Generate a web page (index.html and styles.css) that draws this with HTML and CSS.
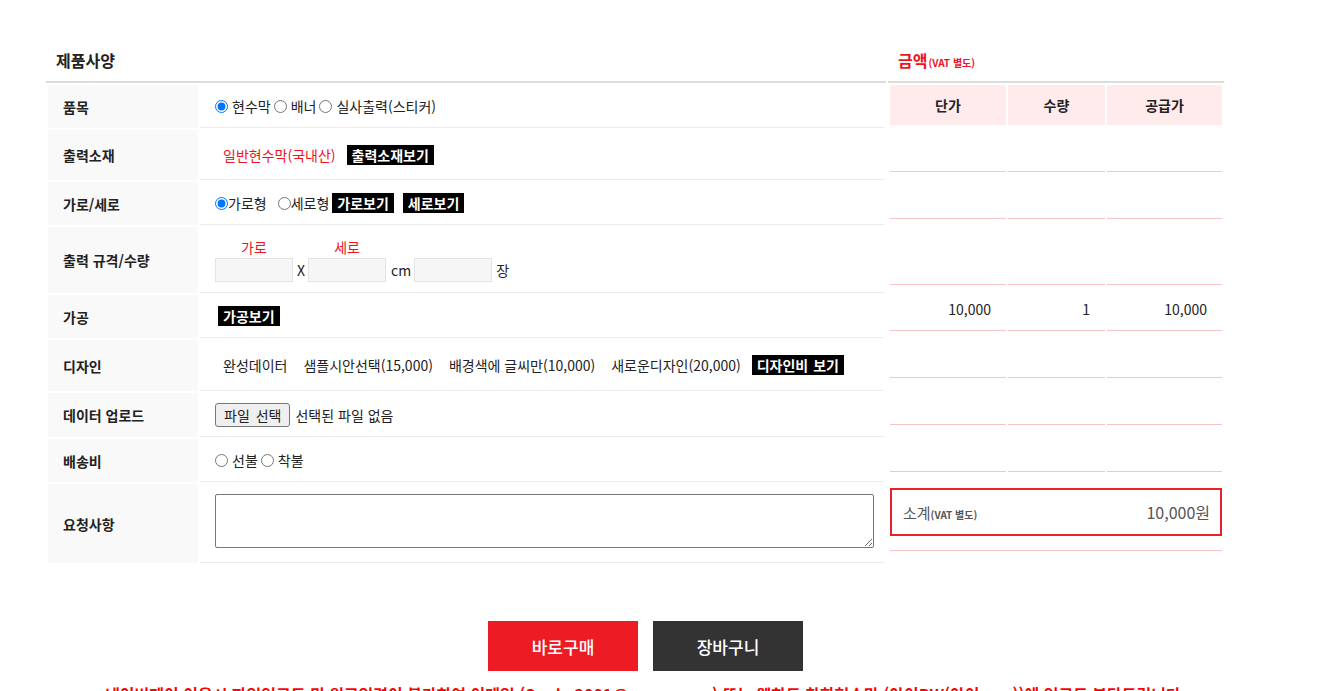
FILE: index.html
```html
<!DOCTYPE html>
<html lang="ko">
<head>
<meta charset="utf-8">
<title>제품사양</title>
<link rel="stylesheet" href="styles.css">
</head>
<body>
<div class="page">
  <div class="order">
    <section class="spec">
      <h2 class="sec-title">제품사양</h2>
      <table class="spec-table">
        <colgroup><col class="c-label"><col></colgroup>
        <tr class="h43">
          <th>품목</th>
          <td><div class="line">
            <label class="opt"><input class="radio" type="radio" name="item" checked>현수막</label>
            <label class="opt"><input class="radio" type="radio" name="item">배너</label>
            <label class="opt"><input class="radio" type="radio" name="item">실사출력(스티커)</label>
          </div></td>
        </tr>
        <tr class="h50">
          <th>출력소재</th>
          <td><div class="line">
            <span class="material">일반현수막(국내산)</span>
            <span class="tag">출력소재보기</span>
          </div></td>
        </tr>
        <tr class="h43">
          <th>가로/세로</th>
          <td><div class="line">
            <label class="opt tight"><input class="radio" type="radio" name="dir" checked>가로형</label>
            <label class="opt tight"><input class="radio" type="radio" name="dir">세로형</label>
            <span class="tag t-garo">가로보기</span>
            <span class="tag t-sero">세로보기</span>
          </div></td>
        </tr>
        <tr class="h66">
          <th>출력 규격/수량</th>
          <td><div class="line size-line">
            <div class="size-group"><span class="size-label">가로</span><input class="size-input" type="text"></div>
            <span class="unit u-x">X</span>
            <div class="size-group"><span class="size-label">세로</span><input class="size-input" type="text"></div>
            <span class="unit u-cm">cm</span>
            <div class="size-group"><input class="size-input" type="text"></div>
            <span class="unit u-ea">장</span>
          </div></td>
        </tr>
        <tr class="h43">
          <th>가공</th>
          <td><div class="line"><span class="tag t-proc">가공보기</span></div></td>
        </tr>
        <tr class="h51">
          <th>디자인</th>
          <td><div class="line design-line">
            <span class="design-opt">완성데이터</span>
            <span class="design-opt">샘플시안선택(15,000)</span>
            <span class="design-opt">배경색에 글씨만(10,000)</span>
            <span class="design-opt">새로운디자인(20,000)</span>
            <span class="tag t-design">디자인비 보기</span>
          </div></td>
        </tr>
        <tr class="h44">
          <th>데이터 업로드</th>
          <td><div class="line">
            <button type="button" class="file-btn">파일 선택</button>
            <span class="file-name">선택된 파일 없음</span>
          </div></td>
        </tr>
        <tr class="h43">
          <th>배송비</th>
          <td><div class="line">
            <label class="opt"><input class="radio" type="radio" name="ship">선불</label>
            <label class="opt"><input class="radio" type="radio" name="ship">착불</label>
          </div></td>
        </tr>
        <tr class="h79">
          <th>요청사항</th>
          <td><div class="line"><textarea class="memo"></textarea></div></td>
        </tr>
      </table>
    </section>

    <section class="price">
      <h2 class="sec-title red">금액<small>(VAT 별도)</small></h2>
      <table class="price-table">
        <colgroup><col class="p1"><col class="p2"><col class="p3"></colgroup>
        <tr class="p-head"><th>단가</th><th>수량</th><th>공급가</th></tr>
        <tr class="h45"><td></td><td></td><td></td></tr>
        <tr class="h45"><td></td><td></td><td></td></tr>
        <tr class="h64"><td></td><td></td><td></td></tr>
        <tr class="h44"><td>10,000</td><td>1</td><td>10,000</td></tr>
        <tr class="h45"><td></td><td></td><td></td></tr>
        <tr class="h45"><td></td><td></td><td></td></tr>
        <tr class="h45"><td></td><td></td><td></td></tr>
        <tr class="h77">
          <td colspan="3" class="sum-cell">
            <div class="sum-box">
              <span class="sum-label">소계<small>(VAT 별도)</small></span>
              <span class="sum-value">10,000원</span>
            </div>
          </td>
        </tr>
      </table>
    </section>
  </div>

  <div class="actions">
    <button type="button" class="btn btn-buy">바로구매</button>
    <button type="button" class="btn btn-cart">장바구니</button>
  </div>
  <p class="notice">네이버페이 이용시 파일업로드 및 원고입력이 불가하여 이메일 (Sunky2001@naver.com) 또는 웹하드 착한현수막 (아이PW(아이 sun))에 업로드 부탁드립니다.</p>
</div>
</body>
</html>
```

FILE: styles.css
```css
* { box-sizing: border-box; }

html, body {
  margin: 0;
  background: #fff;
}

body {
  font-family: "Noto Sans CJK KR", "Noto Sans", sans-serif;
  color: #333;
  font-size: 13px;
  overflow: hidden;
}

.page {
  padding: 40px 0 0 46px;
}

.order {
  display: flex;
  gap: 2px;
  align-items: flex-start;
}

.spec { width: 840px; }
.price { width: 336px; }

.sec-title {
  margin: 0;
  height: 43px;
  border-bottom: 2px solid #dcdcdc;
  font-size: 16px;
  font-weight: 700;
  line-height: 41px;
  padding-left: 10px;
  color: #222;
}

.sec-title.red {
  color: #f0131e;
  font-size: 16px;
}

.sec-title.red small {
  font-size: 10px;
  font-weight: 700;
  margin-left: 1px;
}

/* spec table */
.spec-table {
  width: 840px;
  border-collapse: separate;
  border-spacing: 2px;
  table-layout: fixed;
}

.c-label { width: 150px; }

.spec-table th {
  background: #f9f9f9;
  text-align: left;
  padding: 0 0 0 15px;
  font-size: 14px;
  font-weight: 700;
  color: #222;
  vertical-align: middle;
}

.spec-table td {
  border-bottom: 1px solid #ececec;
  padding: 0 10px 0 15px;
  vertical-align: middle;
}

.h43 { height: 43px; }
.h44 { height: 44px; }
.h45 { height: 45px; }
.h50 { height: 50px; }
.h51 { height: 51px; }
.h64 { height: 64px; }
.h66 { height: 66px; }
.h77 { height: 77px; }
.h79 { height: 79px; }

.line {
  display: flex;
  align-items: center;
  font-size: 14px;
  color: #222;
}

.opt {
  display: inline-flex;
  align-items: center;
  margin-right: 3px;
}

.radio {
  width: 13px;
  height: 13px;
  margin: 1px 4px 0 0;
}

.opt.tight .radio { margin-right: 0; }
.opt.tight { margin-right: 11px; }
.opt.tight + .opt.tight { margin-right: 3px; }

.tag {
  display: inline-block;
  background: #000;
  color: #fff;
  font-weight: 700;
  font-size: 14px;
  line-height: 20px;
  padding: 0 5px;
  white-space: nowrap;
}

.material {
  color: #f0131e;
  margin: 0 11px 0 8px;
}

.t-sero { margin-left: 9px; }
.t-proc { margin-left: 3px; }
.t-design { word-spacing: 1px; padding: 0 5px; }

/* size row */
.size-line { align-items: flex-end; }

.size-group {
  display: flex;
  flex-direction: column;
  align-items: center;
}

.size-label {
  color: #f0131e;
  line-height: 18px;
  margin-bottom: 2px;
}

.size-input {
  width: 78px;
  height: 24px;
  margin: 0;
  border: 1px solid #e3e3e3;
  background: #f6f6f6;
  border-radius: 0;
  padding: 0 4px;
}

.unit { line-height: 24px; }
.u-x { margin: 0 3px 0 4px; }
.u-cm { margin: 0 3px 0 5px; }
.u-ea { margin-left: 4px; }

/* design row */
.design-opt { margin-right: 16px; }
.design-opt:first-child { margin-left: 8px; }
.design-opt:nth-child(4) { margin-right: 11px; }

/* file */
.file-btn {
  height: 24px;
  margin: 0 5px 0 0;
  padding: 0 8px;
  font-family: inherit;
  font-size: 14px;
  color: #222;
  background: #efefef;
  border: 1px solid #767676;
  border-radius: 3px;
  word-spacing: 2px;
}

.memo {
  width: 660px;
  height: 54px;
  margin: 0 0 4px;
  border: 1px solid #767676;
  border-radius: 2px;
  font-family: inherit;
}

/* price table */
.price-table {
  width: 336px;
  border-collapse: separate;
  border-spacing: 2px;
  table-layout: fixed;
}

.p1 { width: 116px; }
.p2 { width: 97px; }
.p3 { width: 115px; }

.p-head { height: 40px; }

.price-table th {
  background: #ffebeb;
  font-size: 14px;
  font-weight: 700;
  color: #222;
  text-align: center;
  padding: 0;
}

.price-table td {
  border-bottom: 1px solid #f6c3c7;
  text-align: right;
  padding: 0 15px 0 0;
  font-size: 14px;
  color: #222;
  vertical-align: middle;
}

.price-table td.sum-cell {
  padding: 14px 0 0 0;
  vertical-align: top;
  text-align: left;
}

.sum-box {
  height: 48px;
  border: 2px solid #e6202c;
  display: flex;
  align-items: center;
  justify-content: space-between;
  padding: 0 10px 0 11px;
  color: #555;
}

.sum-label { font-size: 15px; }
.sum-label small { font-size: 10px; font-weight: 700; }
.sum-value { font-size: 16px; }

/* actions */
.actions {
  width: 1199px;
  display: flex;
  justify-content: center;
  gap: 15px;
  margin-top: 56px;
}

.btn {
  width: 150px;
  height: 50px;
  border: 0;
  margin: 0;
  color: #fff;
  font-family: inherit;
  font-size: 17px;
  font-weight: 500;
}

.btn-buy { background: #ed1c24; }
.btn-cart { background: #333; }

.notice {
  width: 1199px;
  margin: 12px 0 0;
  text-align: center;
  color: #f00;
  font-weight: 700;
  font-size: 16px;
  line-height: 23px;
}
```
